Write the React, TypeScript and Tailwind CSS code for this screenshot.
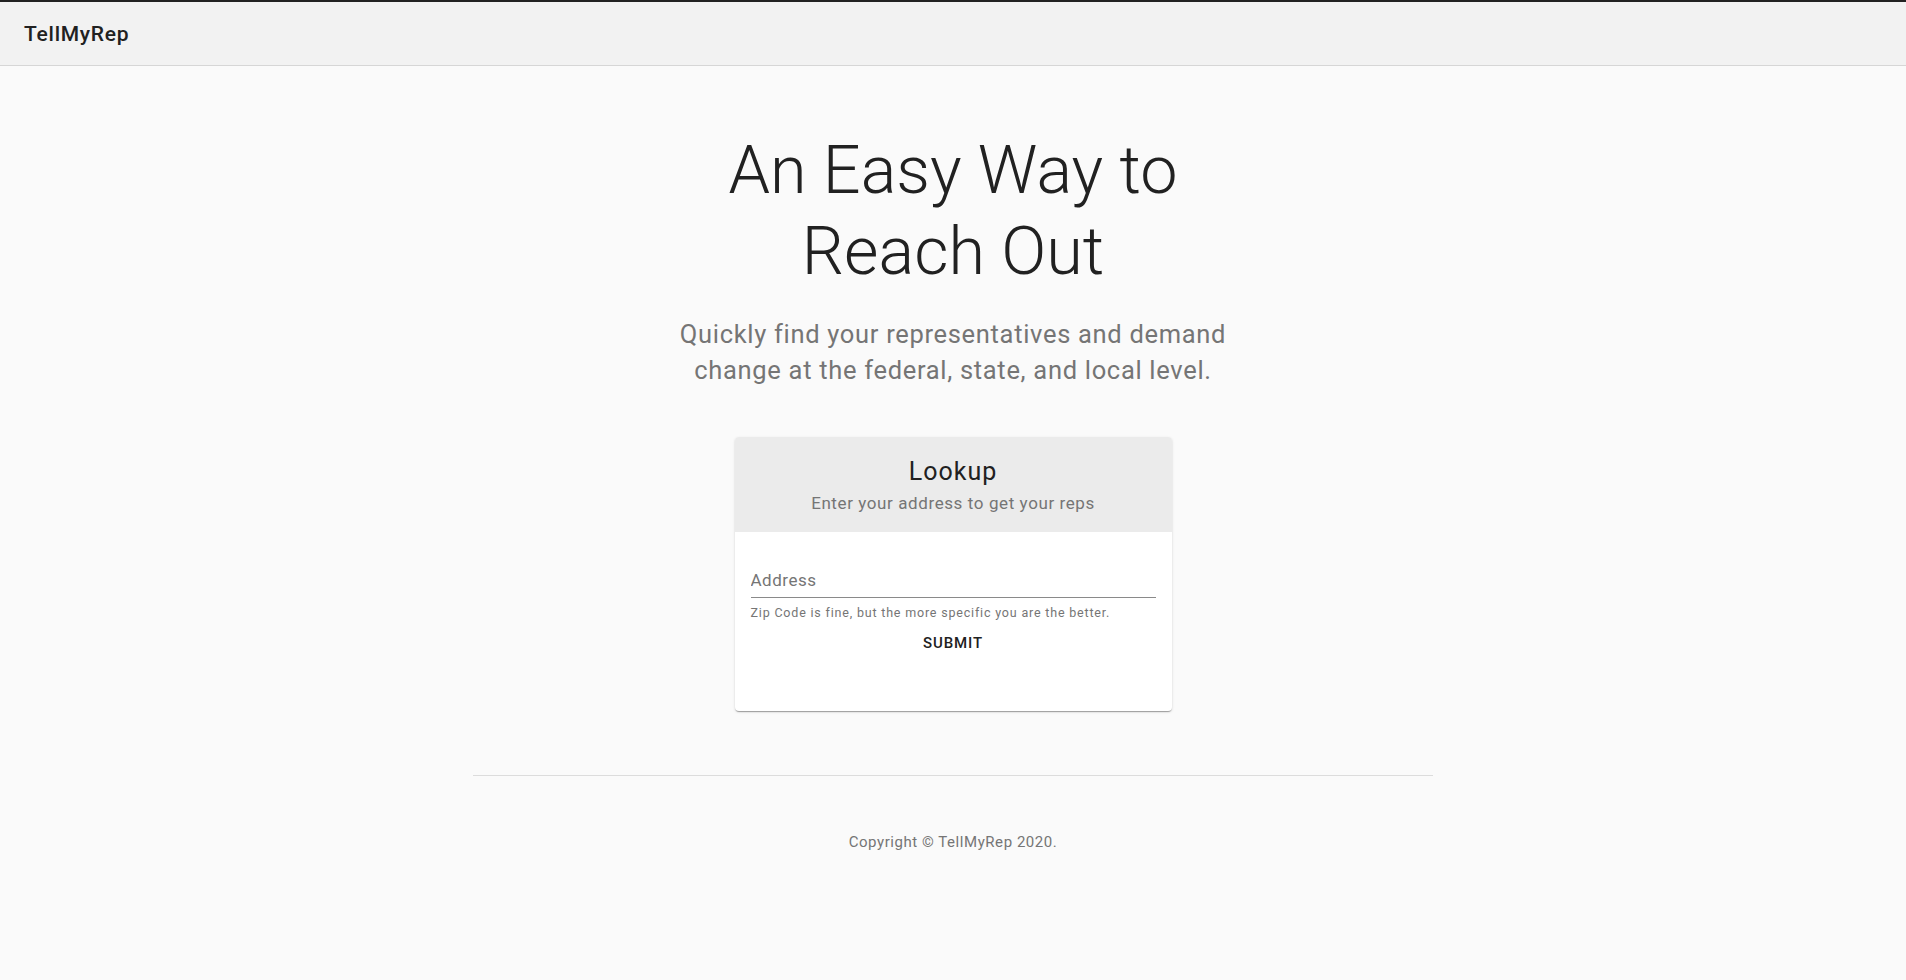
import React from "react";

export default function App() {
  return (
    <div
      className="min-h-screen bg-[#fafafa] border-t-2 border-[#222222] text-[#212121]"
      style={{ fontFamily: "Roboto, 'Noto Sans', Arial, sans-serif" }}
    >
      <header className="h-[64px] bg-[#f2f2f2] border-b border-[#d6d6d6] px-6 flex items-center">
        <span className="text-[21px] font-medium leading-none tracking-[0.035em] pt-[1px]">TellMyRep</span>
      </header>

      <main className="flex flex-col items-center">
        <h1 className="pt-[64px] text-[66.5px] leading-[81px] font-light text-center text-[#212121]">
          An Easy Way to
          <br />
          Reach Out
        </h1>
        <p className="mt-[24px] text-[25.5px] leading-[36px] text-center text-[#757575] tracking-[0.027em]">
          Quickly find your representatives and demand
          <br />
          change at the federal, state, and local level.
        </p>

        <div className="mt-[49px] w-[437px] rounded-[4px] bg-white overflow-hidden shadow-[0_2px_1px_-1px_rgba(0,0,0,0.2),0_1px_1px_0_rgba(0,0,0,0.14),0_1px_3px_0_rgba(0,0,0,0.12)]">
          <div className="bg-[#ebebeb] pt-[18px] pb-[16px] text-center">
            <div className="text-[25px] leading-[33px] text-[#212121] tracking-[0.04em]">Lookup</div>
            <div className="mt-[3px] text-[17px] leading-[25px] text-[#757575] tracking-[0.035em]">
              Enter your address to get your reps
            </div>
          </div>
          <div className="px-[16px] pt-[36px] pb-[56px] flex flex-col">
            <div className="border-b border-[#8a8a8a] pb-[4px]">
              <input
                type="text"
                placeholder="Address"
                className="w-full bg-transparent outline-none text-[17px] leading-[24px] h-[24px] p-0 tracking-[0.03em] text-[#212121] placeholder:text-[#757575]"
              />
            </div>
            <div className="mt-[5px] text-[12.5px] leading-[20px] text-[#757575] tracking-[0.065em]">
              Zip Code is fine, but the more specific you are the better.
            </div>
            <div className="mt-[8px] flex justify-center">
              <button className="text-[15px] leading-[24px] font-medium tracking-[0.057em] text-[#212121] uppercase">
                Submit
              </button>
            </div>
          </div>
        </div>

        <div className="mt-[64px] w-[960px] border-t border-[#dcdcdc]" />

        <p className="mt-[56px] text-[15px] leading-[20px] text-[#757575] tracking-[0.037em]">
          Copyright © TellMyRep 2020.
        </p>
      </main>
    </div>
  );
}
